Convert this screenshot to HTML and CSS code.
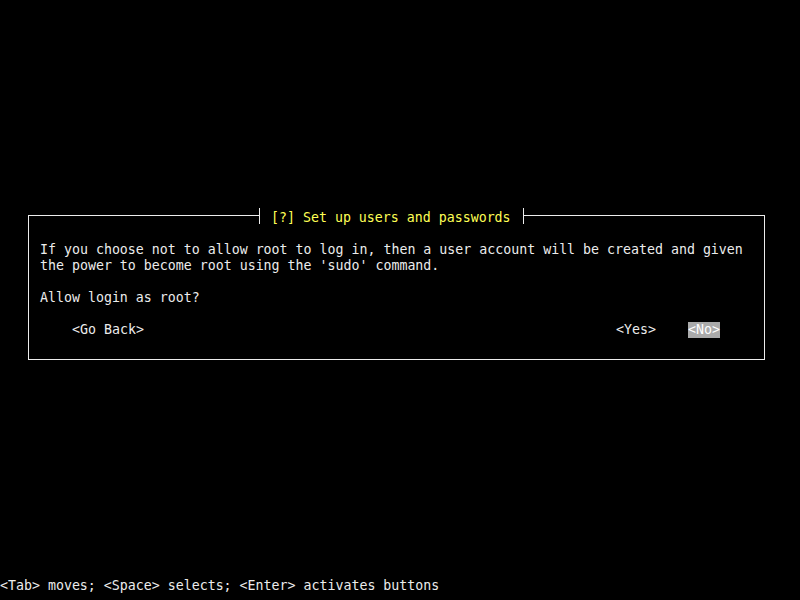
FILE: index.html
```html
<!DOCTYPE html>
<html>
<head>
<meta charset="utf-8">
<link rel="stylesheet" href="styles.css">
</head>
<body>
<div class="screen">
  <div class="dialog">
    <div class="title">[?] Set up users and passwords</div>
    <div class="text">If you choose not to allow root to log in, then a user account will be created and given
the power to become root using the 'sudo' command.</div>
    <div class="text question">Allow login as root?</div>
    <div class="buttons">
      <span class="btn">&lt;Go Back&gt;</span>
      <span class="btn yes">&lt;Yes&gt;</span>
      <span class="btn active">&lt;No&gt;</span>
    </div>
  </div>
  <div class="status">&lt;Tab&gt; moves; &lt;Space&gt; selects; &lt;Enter&gt; activates buttons</div>
</div>
</body>
</html>
```
FILE: styles.css
```css
html, body {
  margin: 0;
  padding: 0;
  background: #000;
}
.screen {
  width: 800px;
  height: 600px;
  box-sizing: border-box;
  padding-bottom: 6px;
  display: flex;
  flex-direction: column;
  font-family: "DejaVu Sans Mono", "Liberation Mono", monospace;
  font-size: 13.288px;
  line-height: 16px;
  color: #ececec;
}
.dialog {
  position: relative;
  margin: 215px 0 0 28px;
  width: 737px;
  height: 145px;
  box-sizing: border-box;
  border: 1px solid #ececec;
  padding: 26px 11px 0 11px;
}
.title {
  position: absolute;
  top: -8px;
  left: 230px;
  width: 240px;
  height: 14px;
  padding: 2px 12px 0 11px;
  box-sizing: content-box;
  background: #000;
  border-left: 1px solid #ececec;
  border-right: 1px solid #ececec;
  color: #ffff55;
  white-space: pre;
}
.text {
  white-space: pre;
}
.question {
  margin-top: 16px;
}
.buttons {
  display: flex;
  margin-top: 16px;
  padding-left: 32px;
  padding-right: 33px;
  gap: 32px;
  white-space: pre;
}
.yes {
  margin-left: auto;
}
.active {
  background: #aaaaaa;
  color: #ffffff;
}
.status {
  margin-top: auto;
  white-space: pre;
}
```
